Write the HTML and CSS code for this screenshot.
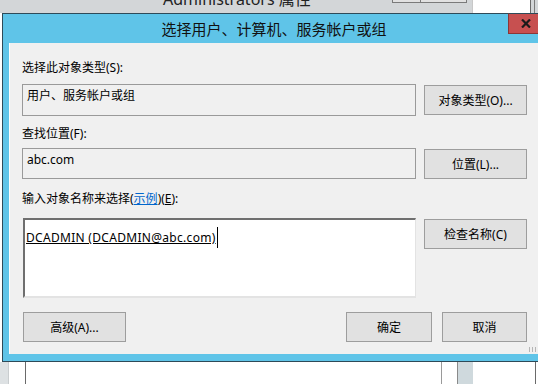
FILE: index.html
```html
<!DOCTYPE html>
<html lang="zh-CN">
<head>
<meta charset="utf-8">
<title>选择用户、计算机、服务帐户或组</title>
<link rel="stylesheet" href="styles.css">
</head>
<body>
<div class="bg-top">
  <div class="bg-title">Administrators 属性</div>
  <div class="bg-btns"><span class="bg-btn b1"></span><span class="bg-btn b2"></span></div>
  <div class="bg-box"></div>
  <div class="bg-edge"></div>
</div>
<div class="dialog">
  <div class="titlebar">
    <div class="title">选择用户、计算机、服务帐户或组</div>
    <div class="close"><svg width="10" height="9" viewBox="0 0 10 9"><path d="M1 0.5 L9 8.5 M9 0.5 L1 8.5" stroke="#1a1a1a" stroke-width="2.2" fill="none"/></svg></div>
  </div>
  <div class="content">
    <div class="label l1">选择此对象类型(S):</div>
    <div class="row r1">
      <div class="field ro">用户、服务帐户或组</div>
      <div class="btn side">对象类型(O)...</div>
    </div>
    <div class="label l2">查找位置(F):</div>
    <div class="row r2">
      <div class="field ro">abc.com</div>
      <div class="btn side">位置(L)...</div>
    </div>
    <div class="label l3">输入对象名称来选择(<span class="link">示例</span>)(<u>E</u>):</div>
    <div class="row r3">
      <div class="field edit"><span class="resolved">DCADMIN (DCADMIN@abc.com)</span><span class="caret"></span></div>
      <div class="btn side">检查名称(C)</div>
    </div>
    <div class="bottom">
      <div class="btn adv">高级(A)...</div>
      <div class="spacer"></div>
      <div class="btn ok">确定</div>
      <div class="btn cancel">取消</div>
    </div>
    <span class="grip"></span>
  </div>
</div>
<div class="bg-bottom">
  <span class="bb-grey"></span>
  <span class="bb-white w1"></span>
  <span class="bb-white w2"></span>
  <span class="bb-block"></span>
  <span class="bb-white w3"></span>
</div>
</body>
</html>
```
FILE: styles.css
```css
html, body {
  margin: 0;
  padding: 0;
  width: 538px;
  height: 384px;
  overflow: hidden;
  background: #ffffff;
}
body {
  font-family: "Noto Sans", "Noto Sans CJK SC", sans-serif;
  font-size: 12px;
  color: #000;
}
.bg-top {
  height: 13px;
  background: #d3d6d8;
  display: flex;
  overflow: hidden;
}
.bg-title {
  margin-left: 163px;
  margin-top: -11px;
  width: 229px;
  font-size: 16px;
  line-height: 20px;
  color: #222;
  white-space: nowrap;
}
.bg-btns {
  display: flex;
  height: 3px;
  width: 75px;
}
.bg-btn {
  height: 2px;
  background: #e1e1e1;
  border: 1px solid #7a7a7a;
  border-top: none;
}
.bg-btn.b1 { width: 27px; }
.bg-btn.b2 { width: 45px; border-left: none; }
.bg-box {
  margin-left: 5px;
  width: 59px;
  height: 13px;
  background: #fff;
  border-left: 1px solid #c8c8c8;
  border-right: 1px solid #6a6a6a;
  box-sizing: border-box;
}
.bg-edge {
  margin-left: 3px;
  width: 1px;
  height: 13px;
  background: #7a7a7a;
}
.dialog {
  margin-left: 2px;
  width: 544px;
  box-sizing: border-box;
  border: 1px solid #2e4a58;
  background: #5fc4e8;
}
.titlebar {
  height: 29px;
  display: grid;
  grid-template-columns: 1fr auto 1fr;
  align-items: center;
}
.title {
  grid-column: 2;
  font-size: 15px;
  line-height: 20px;
  color: #111;
  padding-top: 1px;
}
.close {
  grid-column: 3;
  justify-self: end;
  align-self: start;
  margin-top: -1px;
  margin-right: 2px;
  width: 35px;
  height: 21px;
  box-sizing: border-box;
  background: #c75050;
  border: 1px solid #8c3636;
  border-top-color: #2e4a58;
  display: flex;
  align-items: center;
  justify-content: center;
}
.close svg { display: block; }
.content {
  position: relative;
  margin: 0 7px 7px 6px;
  background: #f0f0f0;
  border-left: 1px solid #ffffff;
  padding: 17px 11px 12px 12px;
  display: flex;
  flex-direction: column;
}
.label {
  height: 16px;
  line-height: 16px;
  white-space: nowrap;
}
.l1 { margin-bottom: 8px; }
.l2 { margin-top: 10px; margin-bottom: 6px; }
.l3 { margin-top: 12px; margin-bottom: 11px; }
.link {
  color: #0066cc;
  text-decoration: underline;
}
.row {
  display: grid;
  grid-template-columns: 394px 103px;
  column-gap: 8px;
  align-items: start;
}
.field {
  box-sizing: border-box;
  line-height: 16px;
  white-space: nowrap;
  overflow: hidden;
}
.field.ro {
  background: #f0f0f0;
  border: 1px solid #9a9a9a;
  padding: 3px 4px;
}
.r1 .field { height: 32px; }
.r2 .field { height: 31px; }
.field.edit {
  height: 80px;
  background: #ffffff;
  border-top: 2px solid #6f6f6f;
  border-left: 2px solid #6f6f6f;
  border-right: 1px solid #e3e3e3;
  border-bottom: 2px solid #e3e3e3;
  padding: 7px 1px;
  margin-left: 1px;
}
.resolved {
  text-decoration: underline;
  letter-spacing: 0.3px;
}
.caret {
  display: inline-block;
  width: 0;
  height: 21px;
  border-left: 1px solid #000;
  vertical-align: -6px;
  margin-left: 1px;
}
.btn {
  box-sizing: border-box;
  height: 30px;
  background: #e1e1e1;
  border: 1px solid #9d9d9d;
  display: flex;
  align-items: center;
  justify-content: center;
  white-space: nowrap;
}
.btn.side { margin-top: 1px; }
.bottom {
  margin-top: 14px;
  display: flex;
  align-items: center;
}
.adv { width: 103px; margin-left: 1px; }
.spacer { flex: 1; }
.ok { width: 86px; margin-right: 10px; }
.cancel { width: 85px; }
.grip {
  position: absolute;
  right: 2px;
  bottom: 2px;
  width: 7px;
  height: 5px;
  background: repeating-linear-gradient(90deg, #b5b5b5 0 1px, transparent 1px 3px);
}
.bg-bottom {
  height: 22px;
  display: flex;
}
.bb-grey {
  width: 8px;
  background: #dde1e3;
  border-right: 1px solid #c9cdcf;
}
.bb-white { background: #fff; }
.w1 { width: 16px; border-right: 1px solid #6a6a6a; }
.w2 { width: 415px; border-right: 1px solid #9a9a9a; }
.bb-block {
  width: 15px;
  margin-left: 15px;
  background: #cfd9dd;
  border-left: 1px solid #8a8a8a;
}
.w3 { width: 62px; border-right: 1px solid #6a6a6a; }
```
